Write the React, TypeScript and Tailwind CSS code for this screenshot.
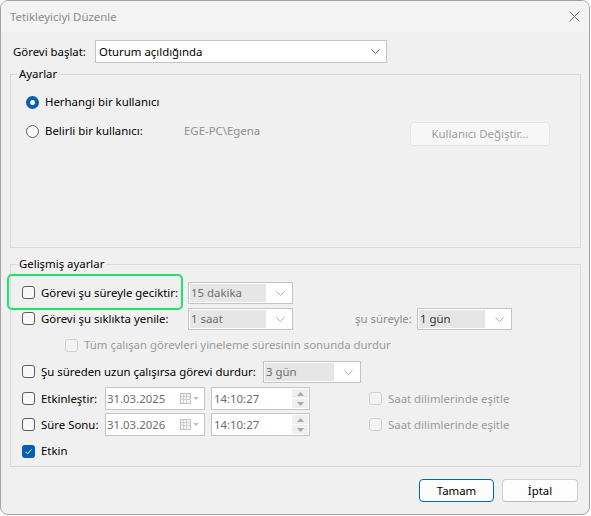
import React from 'react';

const font = { fontFamily: '"Noto Sans", "Segoe UI", sans-serif' };

function Checkbox({ checked = false, disabled = false }: { checked?: boolean; disabled?: boolean }) {
  if (checked) {
    return (
      <span className="w-[13px] h-[13px] rounded-[3px] bg-[#005fb8] flex items-center justify-center shrink-0">
        <svg width="9" height="9" viewBox="0 0 9 9">
          <path d="M1.5 4.8l2 2 4-4.5" fill="none" stroke="#fff" strokeWidth="1" />
        </svg>
      </span>
    );
  }
  return (
    <span
      className={`w-[13px] h-[13px] rounded-[3px] border shrink-0 ${
        disabled ? 'border-[#cfcfcf] bg-[#f3f3f3]' : 'border-[#5f5f5f] bg-[#f7f7f7]'
      }`}
    />
  );
}

function Radio({ checked = false }: { checked?: boolean }) {
  if (checked) {
    return (
      <span className="w-[13px] h-[13px] rounded-full bg-[#005fb8] flex items-center justify-center shrink-0">
        <span className="w-[5px] h-[5px] rounded-full bg-white" />
      </span>
    );
  }
  return <span className="w-[13px] h-[13px] rounded-full border border-[#5f5f5f] bg-[#f7f7f7] shrink-0" />;
}

function Chevron({ color = '#a0a0a0' }: { color?: string }) {
  return (
    <svg width="9" height="5" viewBox="0 0 9 5">
      <path d="M0.5 0.5l4 4 4-4" fill="none" stroke={color} strokeWidth="1" />
    </svg>
  );
}

function Combo({ text, width, dark = false }: { text: string; width: string; dark?: boolean }) {
  return (
    <div className={`${width} h-[22px] border border-[#c4c4c4] bg-white flex items-center pl-[1px] pr-[7px] shrink-0`}>
      <span className={`flex-1 h-[18px] bg-[#e6e6e6] leading-[18px] px-[1px] ${dark ? 'text-[#333]' : 'text-[#6d6d6d]'}`}>
        {text}
      </span>
      <span className="w-[19px] flex justify-end">
        <Chevron color="#b0b0b0" />
      </span>
    </div>
  );
}

function DateBox({ text }: { text: string }) {
  return (
    <div className="w-[100px] h-[23px] border border-[#c4c4c4] bg-white flex items-center pl-[1px] pr-[4px] shrink-0">
      <span className="flex-1 text-[#6d6d6d]">{text}</span>
      <svg width="20" height="11" viewBox="0 0 20 11">
        <rect x="0.5" y="0.5" width="10" height="10" fill="#f4f4f4" stroke="#c0c0c0" />
        <path d="M0.5 3.5h10M0.5 6.5h10M3.5 0.5v10M6.5 0.5v10" stroke="#d0d0d0" />
        <path d="M13 4h6l-3 3z" fill="#c0c0c0" />
      </svg>
    </div>
  );
}

function TimeBox({ text }: { text: string }) {
  return (
    <div className="w-[99px] h-[23px] border border-[#c4c4c4] bg-white flex items-center pl-[2px] pr-[1px] shrink-0">
      <span className="flex-1 text-[#6d6d6d]">{text}</span>
      <div className="flex flex-col gap-[1px] w-[16px]">
        <span className="h-[9px] bg-[#efefef] flex items-center justify-center">
          <svg width="7" height="4" viewBox="0 0 7 4"><path d="M0 4h7L3.5 0z" fill="#a8a8a8" /></svg>
        </span>
        <span className="h-[9px] bg-[#efefef] flex items-center justify-center">
          <svg width="7" height="4" viewBox="0 0 7 4"><path d="M0 0h7L3.5 4z" fill="#a8a8a8" /></svg>
        </span>
      </div>
    </div>
  );
}

function Group({ title, className, children }: { title: string; className?: string; children: React.ReactNode }) {
  return (
    <fieldset className={`border border-[#d9d9d9] ${className ?? ''}`}>
      <legend className="ml-[6px] px-[2px] leading-[16px] text-black">{title}</legend>
      {children}
    </fieldset>
  );
}

export default function App() {
  return (
    <div className="w-[591px] h-[516px] bg-white text-[11.4px] text-black whitespace-nowrap" style={font}>
      <div className="w-[590px] h-[515px] rounded-lg border border-[#a3a3a3] bg-[#f0f0f0] overflow-hidden flex flex-col">
        <div className="h-[31px] bg-[#f3f3f3] flex items-center justify-between pl-[9px] pr-[9px] shrink-0">
          <span className="text-[#8b8b8b]">Tetikleyiciyi Düzenle</span>
          <svg width="11" height="11" viewBox="0 0 11 11">
            <path d="M0.5 0.5l10 10M10.5 0.5l-10 10" stroke="#6a6a6a" strokeWidth="1" />
          </svg>
        </div>

        <div className="flex-1 pl-[9px] pr-[8px] pt-[8px]">
          <div className="flex items-center h-[23px]">
            <span className="w-[82px] ml-[3px]">Görevi başlat:</span>
            <div className="w-[292px] h-[23px] border border-[#c4c4c4] bg-white flex items-center pl-[3px] pr-[6px]">
              <span className="flex-1">Oturum açıldığında</span>
              <Chevron color="#606060" />
            </div>
          </div>

          <Group title="Ayarlar" className="mt-[3px]">
            <div className="h-[165px] pt-[12px] pl-[15px]">
              <div className="flex items-center gap-[6px] h-[16px]">
                <Radio checked />
                <span>Herhangi bir kullanıcı</span>
              </div>
              <div className="flex items-start mt-[13px] h-[24px]">
                <div className="flex items-center gap-[6px] h-[16px] w-[158px]">
                  <Radio />
                  <span>Belirli bir kullanıcı:</span>
                </div>
                <span className="h-[16px] leading-[16px] text-[#8e8e8e] w-[226px]">EGE-PC\Egena</span>
                <button className="-mt-[1px] w-[140px] h-[24px] rounded-[4px] border border-[#e5e5e5] bg-[#f7f7f7] text-[#9d9d9d]">
                  Kullanıcı Değiştir...
                </button>
              </div>
            </div>
          </Group>

          <Group title="Gelişmiş ayarlar" className="mt-[8px]">
            <div className="h-[194px] pl-[11px] pt-[10px]">
              <div className="relative flex items-center h-[22px]">
                <div className="absolute -left-[15px] -top-[8px] w-[176px] h-[36px] rounded-[5px] border-2 border-[#1ee36a]" />
                <div className="flex items-center gap-[6px] w-[166px]">
                  <Checkbox />
                  <span>Görevi şu süreyle geciktir:</span>
                </div>
                <Combo text="15 dakika" width="w-[105px]" />
              </div>

              <div className="flex items-center h-[22px] mt-[4px]">
                <div className="flex items-center gap-[6px] w-[166px]">
                  <Checkbox />
                  <span>Görevi şu sıklıkta yenile:</span>
                </div>
                <Combo text="1 saat" width="w-[105px]" />
                <span className="ml-[62px] w-[62px] text-[#8e8e8e]">şu süreyle:</span>
                <Combo text="1 gün" width="w-[95px]" dark />
              </div>

              <div className="flex items-center gap-[6px] h-[20px] mt-[5px] pl-[43px]">
                <Checkbox disabled />
                <span className="text-[#9a9a9a]">Tüm çalışan görevleri yineleme süresinin sonunda durdur</span>
              </div>

              <div className="flex items-center h-[22px] mt-[6px]">
                <div className="flex items-center gap-[6px] w-[241px]">
                  <Checkbox />
                  <span>Şu süreden uzun çalışırsa görevi durdur:</span>
                </div>
                <Combo text="3 gün" width="w-[98px]" />
              </div>

              <div className="flex items-center h-[23px] mt-[4px]">
                <div className="flex items-center gap-[6px] w-[83px]">
                  <Checkbox />
                  <span>Etkinleştir:</span>
                </div>
                <DateBox text="31.03.2025" />
                <span className="w-[6px]" />
                <TimeBox text="14:10:27" />
                <div className="flex items-center gap-[6px] ml-[59px]">
                  <Checkbox disabled />
                  <span className="text-[#9a9a9a]">Saat dilimlerinde eşitle</span>
                </div>
              </div>

              <div className="flex items-center h-[23px] mt-[3px]">
                <div className="flex items-center gap-[6px] w-[83px]">
                  <Checkbox />
                  <span>Süre Sonu:</span>
                </div>
                <DateBox text="31.03.2026" />
                <span className="w-[6px]" />
                <TimeBox text="14:10:27" />
                <div className="flex items-center gap-[6px] ml-[59px]">
                  <Checkbox disabled />
                  <span className="text-[#9a9a9a]">Saat dilimlerinde eşitle</span>
                </div>
              </div>

              <div className="flex items-center gap-[6px] h-[20px] mt-[5px]">
                <Checkbox checked />
                <span>Etkin</span>
              </div>
            </div>
          </Group>

          <div className="flex justify-end gap-[8px] mt-[12px] pr-[3px]">
            <button className="w-[75px] h-[23px] rounded-[4px] border border-[#0067c0] bg-[#fdfdfd] text-black">
              Tamam
            </button>
            <button className="w-[76px] h-[23px] rounded-[4px] border border-[#d0d0d0] border-b-[#b8b8b8] bg-[#fdfdfd] text-black">
              İptal
            </button>
          </div>
        </div>
      </div>
    </div>
  );
}
